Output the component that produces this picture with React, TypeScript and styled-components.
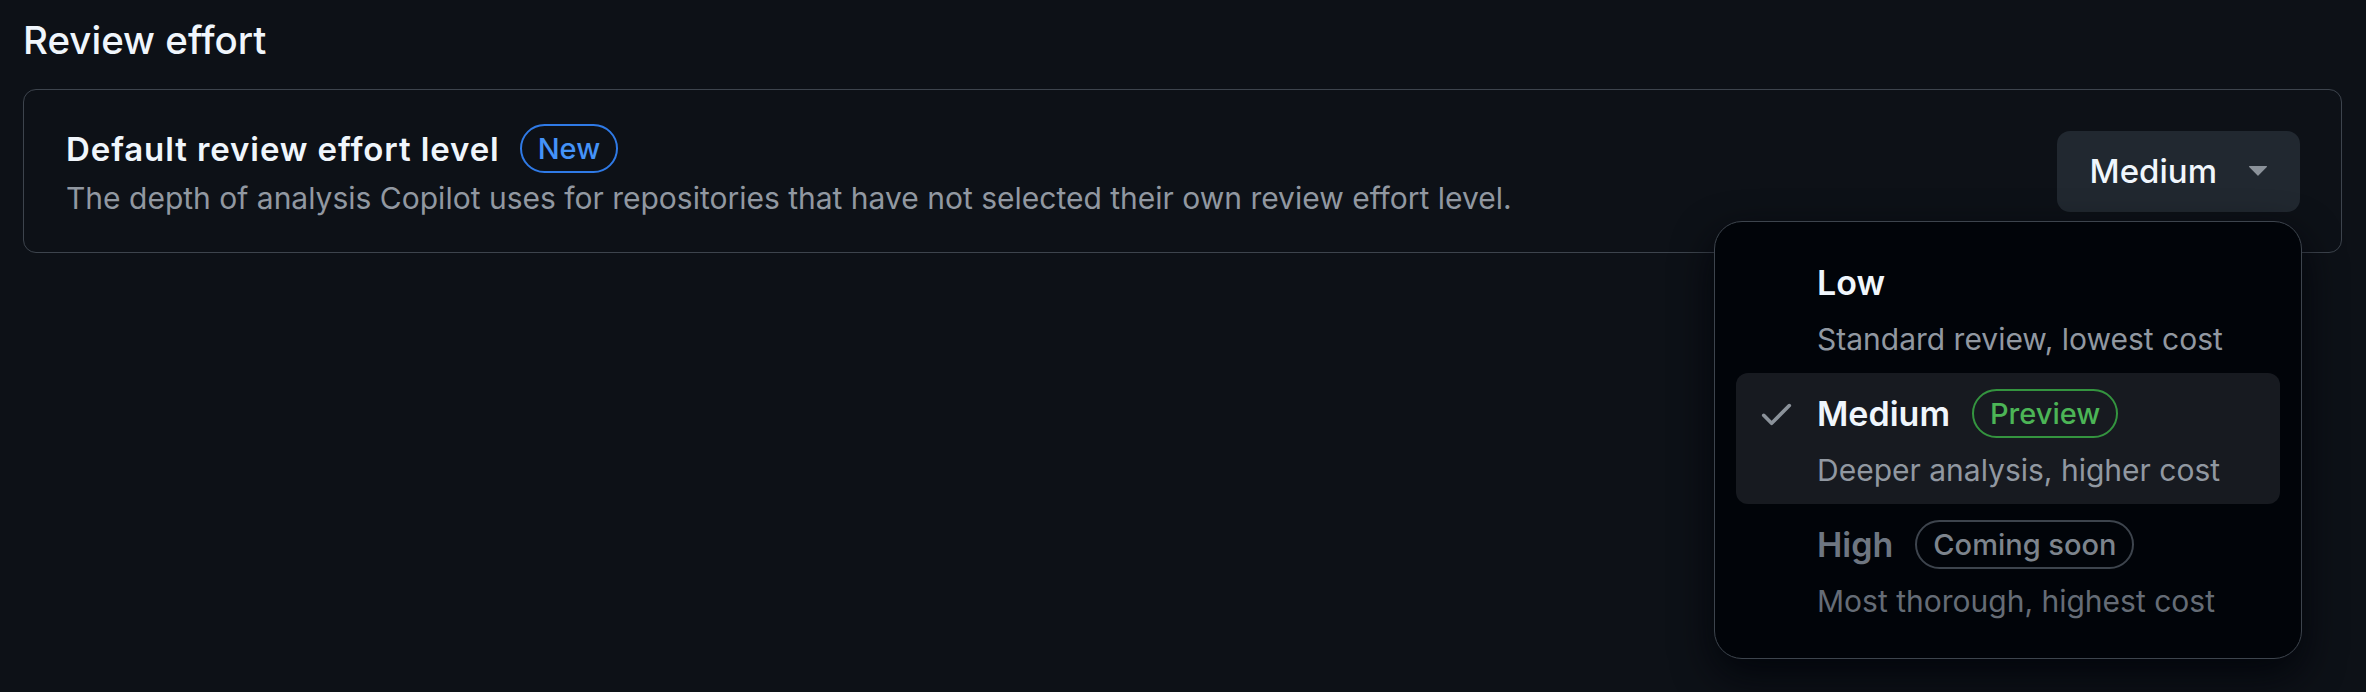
import React from "react";
import styled, { createGlobalStyle, css } from "styled-components";

const GlobalStyle = createGlobalStyle`
  html, body {
    margin: 0;
    background-color: #0d1117;
  }
  body {
    font-family: Inter, "Noto Sans", "Liberation Sans", sans-serif;
    color: #f0f6fc;
  }
`;

const Page = styled.div`
  min-height: 692px;
  padding: 18px 24px 0 23px;
  box-sizing: border-box;
  width: 100%;
`;

const Heading = styled.h2`
  margin: 0 0 27px;
  font-size: 38.5px;
  line-height: 44px;
  font-weight: 500;
  color: #f0f6fc;
`;

const SettingBox = styled.div`
  display: flex;
  align-items: center;
  justify-content: space-between;
  min-height: 164px;
  box-sizing: border-box;
  padding: 0 41px 0 42px;
  border: 1px solid #3d444d;
  border-radius: 13px;
`;

const Info = styled.div`
  display: flex;
  flex-direction: column;
  gap: 5px;
`;

const TitleRow = styled.div`
  display: flex;
  align-items: center;
  gap: 20px;
  height: 49px;
`;

const Title = styled.span`
  font-size: 33px;
  font-weight: 600;
  letter-spacing: 0.9px;
  color: #f0f6fc;
`;

const Description = styled.div`
  font-size: 30px;
  line-height: 40px;
  color: #9198a1;
`;

type BadgeTone = "accent" | "success" | "muted";

const toneStyles = {
  accent: css`
    color: #4493f8;
    border-color: #2f7ae6;
  `,
  success: css`
    color: #4cb556;
    border-color: #34943f;
  `,
  muted: css`
    color: #7d848d;
    border-color: #3d444d;
  `,
};

const Badge = styled.span<{ $tone: BadgeTone }>`
  display: inline-flex;
  align-items: center;
  height: 49px;
  box-sizing: border-box;
  padding: 0 16px;
  border: 2px solid;
  border-radius: 999px;
  font-size: 29px;
  font-weight: 500;
  letter-spacing: 0;
  ${(p) => toneStyles[p.$tone]}
`;

const SelectWrap = styled.div`
  position: relative;
`;

const SelectButton = styled.button`
  display: flex;
  align-items: center;
  gap: 32px;
  height: 81px;
  padding: 0 33px;
  border: none;
  border-radius: 13px;
  background-color: #212830;
  color: #f0f6fc;
  font-family: inherit;
  font-size: 33px;
  font-weight: 500;
`;

const Caret = styled.svg`
  width: 18px;
  height: 10px;
  fill: #8b929a;
`;

const Menu = styled.div`
  position: absolute;
  top: calc(100% + 9px);
  right: -2px;
  width: 588px;
  box-sizing: border-box;
  padding: 20px 21px 23px;
  background-color: #010409;
  border: 1px solid #3d444d;
  border-radius: 28px;
  box-shadow: 0 16px 40px rgba(1, 4, 9, 0.85);
  z-index: 10;
`;

const Item = styled.div<{ $selected?: boolean }>`
  display: flex;
  gap: 21px;
  padding: 16px 24px 14px 21px;
  border-radius: 12px;
  background-color: ${(p) => (p.$selected ? "#171a20" : "transparent")};
`;

const Lead = styled.div`
  display: flex;
  align-items: center;
  justify-content: center;
  width: 39px;
  height: 49px;
  flex-shrink: 0;
`;

const Check = styled.svg`
  width: 39px;
  height: 39px;
  fill: #8b929a;
`;

const ItemBody = styled.div`
  display: flex;
  flex-direction: column;
  gap: 12px;
`;

const ItemLabelRow = styled.div`
  display: flex;
  align-items: center;
  gap: 22px;
  height: 49px;
`;

const ItemLabel = styled.span<{ $disabled?: boolean }>`
  font-size: 34px;
  font-weight: 600;
  color: ${(p) => (p.$disabled ? "#6e7681" : "#f0f6fc")};
`;

const ItemDesc = styled.div<{ $disabled?: boolean }>`
  font-size: 30px;
  line-height: 40px;
  color: ${(p) => (p.$disabled ? "#656c76" : "#9198a1")};
`;

type Option = {
  label: string;
  description: string;
  badge?: { text: string; tone: BadgeTone };
  selected?: boolean;
  disabled?: boolean;
};

const options: Option[] = [
  { label: "Low", description: "Standard review, lowest cost" },
  {
    label: "Medium",
    description: "Deeper analysis, higher cost",
    badge: { text: "Preview", tone: "success" },
    selected: true,
  },
  {
    label: "High",
    description: "Most thorough, highest cost",
    badge: { text: "Coming soon", tone: "muted" },
    disabled: true,
  },
];

const App = () => {
  return (
    <>
      <GlobalStyle />
      <Page>
        <Heading>Review effort</Heading>
        <SettingBox>
          <Info>
            <TitleRow>
              <Title>Default review effort level</Title>
              <Badge $tone="accent">New</Badge>
            </TitleRow>
            <Description>
              The depth of analysis Copilot uses for repositories that have not
              selected their own review effort level.
            </Description>
          </Info>
          <SelectWrap>
            <SelectButton>
              Medium
              <Caret viewBox="0 0 18 10">
                <path d="M0.6 0H17.4a.6.6 0 0 1 .42 1.02L9.42 9.42a.6.6 0 0 1-.84 0L.18 1.02A.6.6 0 0 1 .6 0Z" />
              </Caret>
            </SelectButton>
            <Menu>
              {options.map((o) => (
                <Item key={o.label} $selected={o.selected}>
                  <Lead>
                    {o.selected && (
                      <Check viewBox="0 0 16 16">
                        <path d="M13.78 4.22a.75.75 0 0 1 0 1.06l-7.25 7.25a.75.75 0 0 1-1.06 0L2.22 9.28a.751.751 0 0 1 .018-1.042.751.751 0 0 1 1.042-.018L6 10.94l6.72-6.72a.75.75 0 0 1 1.06 0Z" />
                      </Check>
                    )}
                  </Lead>
                  <ItemBody>
                    <ItemLabelRow>
                      <ItemLabel $disabled={o.disabled}>{o.label}</ItemLabel>
                      {o.badge && <Badge $tone={o.badge.tone}>{o.badge.text}</Badge>}
                    </ItemLabelRow>
                    <ItemDesc $disabled={o.disabled}>{o.description}</ItemDesc>
                  </ItemBody>
                </Item>
              ))}
            </Menu>
          </SelectWrap>
        </SettingBox>
      </Page>
    </>
  );
};

export default App;
